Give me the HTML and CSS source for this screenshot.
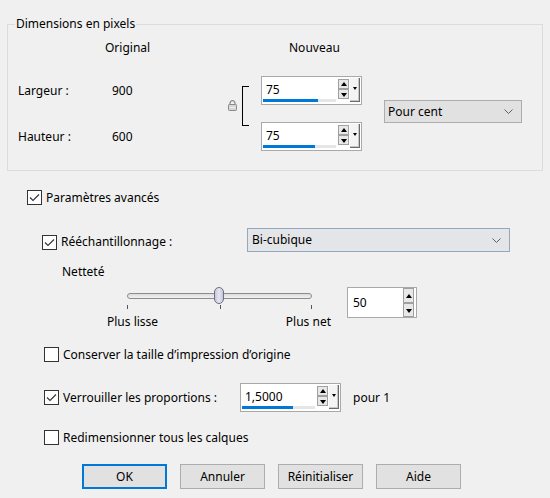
FILE: index.html
```html
<!DOCTYPE html>
<html lang="fr">
<head>
<meta charset="utf-8">
<title>Redimensionner</title>
<link rel="stylesheet" href="styles.css">
</head>
<body>
<div class="dlg">
  <fieldset class="dims">
    <legend>Dimensions en pixels</legend>
    <div class="dims-grid">
      <span class="hd hd-orig">Original</span>
      <span class="hd hd-new">Nouveau</span>

      <span class="lbl row-w">Largeur :</span>
      <span class="val row-w">900</span>

      <div class="link">
        <svg class="lock" width="9" height="11" viewBox="0 0 9 11">
          <path d="M2 5V3.2A2.5 2.5 0 0 1 7 3.2V5" fill="none" stroke="#8a8a8a" stroke-width="1.2"/>
          <rect x="0.5" y="4.5" width="8" height="6" rx="0.8" fill="#d6d6d6" stroke="#8a8a8a"/>
          <line x1="1.5" y1="7.5" x2="7.5" y2="7.5" stroke="#eeeeee"/>
        </svg>
        <div class="bracket"></div>
      </div>

      <div class="spin spin-big row-w">
        <div class="spin-field">
          <span class="spin-val">75</span>
          <div class="spin-track"><div class="spin-fill" style="width:55px"></div></div>
        </div>
        <div class="spin-btns">
          <span class="sb sb-up"></span>
          <span class="sb sb-dn"></span>
        </div>
        <span class="spin-drop"></span>
      </div>

      <div class="combo combo-pct">
        <span>Pour cent</span>
        <svg class="chev" width="9" height="5" viewBox="0 0 9 5"><path d="M0.5 0.5L4.5 4.5L8.5 0.5" fill="none" stroke="#606060"/></svg>
      </div>

      <span class="lbl row-h">Hauteur :</span>
      <span class="val row-h">600</span>

      <div class="spin spin-big row-h">
        <div class="spin-field">
          <span class="spin-val">75</span>
          <div class="spin-track"><div class="spin-fill" style="width:52px"></div></div>
        </div>
        <div class="spin-btns">
          <span class="sb sb-up"></span>
          <span class="sb sb-dn"></span>
        </div>
        <span class="spin-drop"></span>
      </div>
    </div>
  </fieldset>

  <div class="opts">
    <div class="row row-adv">
      <label class="chk"><span class="box on"></span><span>Paramètres avancés</span></label>
    </div>

    <div class="row row-resample">
      <label class="chk chk-resample"><span class="box on"></span><span>Rééchantillonnage :</span></label>
      <div class="combo combo-method">
        <span>Bi-cubique</span>
        <svg class="chev" width="9" height="5" viewBox="0 0 9 5"><path d="M0.5 0.5L4.5 4.5L8.5 0.5" fill="none" stroke="#606060"/></svg>
      </div>
    </div>

    <div class="row row-sharp-lbl">Netteté</div>

    <div class="row row-sharp">
      <div class="slider">
        <div class="slider-rail">
          <div class="slider-track"></div>
          <div class="slider-thumb"></div>
        </div>
        <div class="slider-ticks"><i></i><i></i><i></i></div>
        <div class="slider-labels"><span>Plus lisse</span><span>Plus net</span></div>
      </div>
      <div class="spin spin-small">
        <div class="spin-field">
          <span class="spin-val">50</span>
        </div>
        <div class="spin-btns">
          <span class="sb sb-up"></span>
          <span class="sb sb-dn"></span>
        </div>
      </div>
    </div>

    <div class="row row-keep">
      <label class="chk"><span class="box"></span><span>Conserver la taille d’impression d’origine</span></label>
    </div>

    <div class="row row-ratio">
      <label class="chk chk-ratio"><span class="box on"></span><span>Verrouiller les proportions :</span></label>
      <div class="spin spin-big">
        <div class="spin-field">
          <span class="spin-val">1,5000</span>
          <div class="spin-track"><div class="spin-fill" style="width:51px"></div></div>
        </div>
        <div class="spin-btns">
          <span class="sb sb-up"></span>
          <span class="sb sb-dn"></span>
        </div>
        <span class="spin-drop"></span>
      </div>
      <span class="per">pour 1</span>
    </div>

    <div class="row row-layers">
      <label class="chk"><span class="box"></span><span>Redimensionner tous les calques</span></label>
    </div>

    <div class="row row-btns">
      <button class="btn btn-default">OK</button>
      <button class="btn">Annuler</button>
      <button class="btn">Réinitialiser</button>
      <button class="btn">Aide</button>
    </div>
  </div>
</div>
</body>
</html>
```

FILE: styles.css
```css
* { box-sizing: border-box; }

html, body {
  margin: 0;
  padding: 0;
  background: #f0f0f0;
}

body {
  width: 550px;
  height: 498px;
  overflow: hidden;
  font-family: "Noto Sans", "Open Sans", sans-serif;
  font-size: 12px;
  line-height: 16px;
  color: #000;
}

.dlg {
  padding-top: 16px;
}

/* ---------- pixel dimensions group ---------- */
.dims {
  margin: 0 7px;
  padding: 0 0 19px 0;
  border: 1px solid #dcdcdc;
  min-width: 0;
}

.dims legend {
  margin-left: 7px;
  padding: 0 1px;
  line-height: 16px;
}

.dims-grid {
  display: grid;
  margin-left: 10px;
  padding-top: 8px;
  grid-template-columns: 87px 123px 33px 101px 22px 138px;
  grid-template-rows: 16px 20px 29px 17px 29px;
}

.hd-orig { grid-column: 2; grid-row: 1; }
.hd-new  { grid-column: 4; grid-row: 1; padding-left: 28px; }

.lbl { grid-column: 1; align-self: center; }
.val { grid-column: 2; align-self: center; padding-left: 7px; }
.row-w { grid-row: 3; }
.row-h { grid-row: 5; }
.spin.row-w, .spin.row-h { grid-column: 4; }

.link {
  grid-column: 3;
  grid-row: 3 / 6;
  display: flex;
  align-items: flex-start;
}

.lock {
  display: block;
  margin-top: 24px;
}

.bracket {
  margin-left: 5px;
  margin-top: 10px;
  width: 7px;
  height: 40px;
  border: 1px solid #000;
  border-right: none;
}

.combo-pct {
  grid-column: 6;
  grid-row: 3 / 6;
  align-self: start;
  margin-top: 24px;
  height: 23px;
  background: #e1e1e1;
  border: 1px solid #adadad;
}

/* ---------- combo box ---------- */
.combo {
  display: flex;
  align-items: center;
  justify-content: space-between;
  padding: 0 8px 0 3px;
}

.chev { display: block; }

/* ---------- spin edit ---------- */
.spin {
  display: flex;
  background: #fff;
  border: 1px solid #a9a9a9;
}

.spin-big {
  width: 101px;
  height: 29px;
  padding: 1px;
}

.spin-field {
  flex: 1;
  display: flex;
  flex-direction: column;
  justify-content: space-between;
}

.spin-val {
  padding-left: 3px;
  margin-top: 4px;
}

.spin-track {
  height: 3px;
  margin-right: 2px;
  margin-bottom: 1px;
  background: #e6e6e6;
}

.spin-fill {
  height: 3px;
  background: #0078d7;
}

.spin-btns {
  display: flex;
  flex-direction: column;
  padding-top: 1px;
}

.sb {
  position: relative;
  display: block;
  width: 11px;
  height: 10px;
  background: #e8e8e8;
  border: 1px solid #a0a0a0;
}

.sb::after {
  content: "";
  position: absolute;
  left: 2px;
  width: 0;
  height: 0;
  border-left: 3px solid transparent;
  border-right: 3px solid transparent;
}

.sb-up::after { top: 2px; border-bottom: 4px solid #000; }
.sb-dn::after { top: 3px; border-top: 4px solid #000; }

.spin-drop {
  position: relative;
  display: block;
  width: 10px;
  height: 24px;
  margin-left: 1px;
  background: #f4f4f4;
  border-right: 1px solid #6a6a6a;
  border-bottom: 1px solid #6a6a6a;
  box-shadow: inset -1px -1px 0 #c8c8c8;
}

.spin-drop::after {
  content: "";
  position: absolute;
  left: 3px;
  top: 9px;
  border-left: 2px solid transparent;
  border-right: 2px solid transparent;
  border-top: 3px solid #000;
}

.spin-small {
  width: 70px;
  height: 31px;
  padding: 0 2px 0 1px;
  margin-left: 16px;
}

.spin-small .spin-field { justify-content: center; }
.spin-small .spin-val { margin-top: 0; padding-left: 4px; }
.spin-small .spin-btns { padding-top: 0; justify-content: center; }
.spin-small .sb { height: 15px; }
.spin-small .sb-up::after { top: 5px; }
.spin-small .sb-dn::after { top: 5px; }

/* ---------- options ---------- */
.opts {
  display: flex;
  flex-direction: column;
}

.row {
  display: flex;
  align-items: center;
}

.chk {
  display: flex;
  align-items: center;
  gap: 4px;
}

.box {
  display: block;
  width: 15px;
  height: 15px;
  background: #fff;
  border: 1px solid #333;
  flex: none;
}

.box.on {
  background: #fff url("data:image/svg+xml;utf8,<svg xmlns='http://www.w3.org/2000/svg' width='13' height='13'><path d='M2 6.5L5 9.5L11 3.5' fill='none' stroke='%23333' stroke-width='1.1'/></svg>") no-repeat 0 0;
}

.row-adv {
  margin-top: 19px;
  height: 15px;
  padding-left: 27px;
}

.row-resample {
  margin-top: 23px;
  height: 24px;
  padding-left: 42px;
  align-items: flex-start;
}

.chk-resample {
  width: 205px;
  margin-top: 6px;
}

.combo-method {
  width: 263px;
  height: 24px;
  background: #e3e5e8;
  border: 1px solid #93a9bf;
  padding-left: 4px;
}

.row-sharp-lbl {
  margin-top: 12px;
  padding-left: 62px;
}

.row-sharp {
  margin-top: 7px;
  padding-left: 107px;
  align-items: flex-start;
}

.slider {
  width: 224px;
  display: flex;
  flex-direction: column;
}

.slider-rail {
  position: relative;
  height: 17px;
  margin: 0 19px 0 20px;
}

.slider-track {
  position: absolute;
  left: 0;
  right: 0;
  top: 6px;
  height: 6px;
  border: 1px solid #8c8c8c;
  border-radius: 3px;
  background: linear-gradient(#dcdcdc, #f2f2f2);
}

/* thumb sits on top of the rail */
.slider-thumb {
  position: absolute;
  left: 87px;
  top: 0;
  width: 10px;
  height: 17px;
  border: 1px solid #6f6f80;
  border-radius: 5px;
  background: linear-gradient(90deg, #c6c6dc, #e6e6f2 50%, #c4c4da);
}

.slider-ticks {
  display: flex;
  justify-content: space-between;
  margin: 1px 19px 0 20px;
  height: 4px;
}

.slider-ticks i {
  display: block;
  width: 1px;
  height: 4px;
  background: #555;
}

.slider-ticks i:nth-child(2) { margin-left: 2px; }

.slider-labels {
  display: flex;
  justify-content: space-between;
  margin-top: 5px;
}

.row-keep {
  margin-top: 17px;
  height: 15px;
  padding-left: 44px;
}

.row-ratio {
  margin-top: 21px;
  height: 29px;
  padding-left: 44px;
}

.chk-ratio { width: 196px; }

.per { margin-left: 12px; }

.row-layers {
  margin-top: 18px;
  height: 15px;
  padding-left: 44px;
}

.row-btns {
  margin-top: 19px;
  padding-left: 82px;
  gap: 13px;
}

.btn {
  width: 85px;
  height: 25px;
  padding: 0;
  margin: 0;
  font: inherit;
  color: #000;
  background: #e1e1e1;
  border: 1px solid #adadad;
}

.btn-default {
  border: 2px solid #0078d7;
}
```
